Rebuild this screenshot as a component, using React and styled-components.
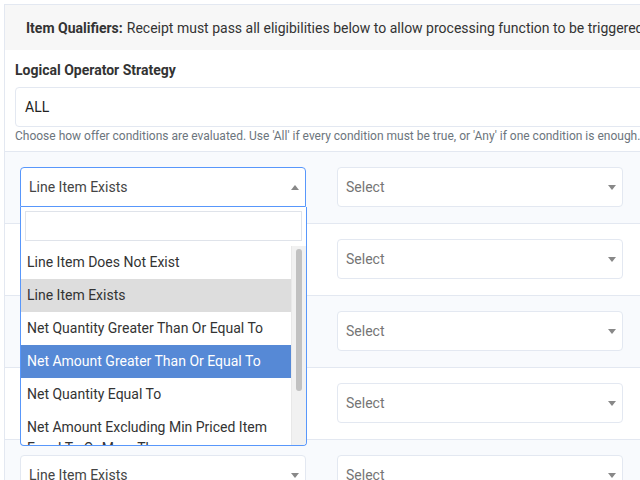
import React from "react";
import styled, { createGlobalStyle } from "styled-components";

const GlobalStyle = createGlobalStyle`
  html, body {
    margin: 0;
    padding: 0;
    background: #fff;
    overflow: hidden;
  }
  body {
    font-family: Roboto, "Liberation Sans", Arial, sans-serif;
    color: #333;
  }
  * {
    box-sizing: border-box;
  }
`;

const conditionOptions = [
  "Line Item Does Not Exist",
  "Line Item Exists",
  "Net Quantity Greater Than Or Equal To",
  "Net Amount Greater Than Or Equal To",
  "Net Quantity Equal To",
  "Net Amount Excluding Min Priced Item Equal To Or More Than",
  "Net Quantity Less Than",
  "Net Amount Less Than",
];

const rows = [
  { condition: "Line Item Exists", open: true },
  { condition: "Line Item Exists" },
  { condition: "Line Item Exists" },
  { condition: "Line Item Exists" },
  { condition: "Line Item Exists" },
];

const Page = styled.div`
  padding: 4px 0 0 4px;
`;

const Card = styled.div`
  width: 960px;
  border: 1px solid #e3e8f1;
  background: #fff;
`;

const CardHeader = styled.div`
  height: 45px;
  display: flex;
  align-items: center;
  padding: 0 21px;
  background: #f7f7f7;
  font-size: 14px;
  color: #333;
  white-space: nowrap;

  strong {
    font-weight: 700;
    margin-right: 4px;
  }
`;

const Section = styled.div`
  padding: 10px 10px 6px;
`;

const Label = styled.div`
  font-size: 14px;
  font-weight: 700;
  line-height: 20px;
  color: #333;
  margin-bottom: 7px;
`;

const TextInput = styled.div`
  height: 40px;
  display: flex;
  align-items: center;
  padding: 0 9px;
  border: 1px solid #e3e8f1;
  border-radius: 4px;
  font-size: 14px;
  color: #222;
`;

const HelpText = styled.div`
  font-size: 12px;
  line-height: 18px;
  color: #6c757d;
  white-space: nowrap;
`;

const ConditionRow = styled.div`
  display: grid;
  grid-template-columns: repeat(3, 286px);
  align-items: start;
  column-gap: 31px;
  height: 72px;
  padding: 15px 15px 0;
  border-top: 1px solid #e3e8f1;
  background: ${(props) => (props.shaded ? "#f8fafd" : "#fff")};
`;

const SelectWrap = styled.div`
  position: relative;
`;

const SelectBox = styled.div`
  position: relative;
  height: 40px;
  display: flex;
  align-items: center;
  padding: 0 30px 0 8px;
  background: #fff;
  border: 1px solid ${(props) => (props.open ? "#5897fb" : "#e3e8f1")};
  border-radius: ${(props) => (props.open ? "4px 4px 0 0" : "4px")};
  font-size: 14px;
  color: ${(props) => (props.placeholder ? "#757575" : "#444")};
  white-space: nowrap;
`;

const Arrow = styled.span`
  position: absolute;
  right: 6px;
  top: 50%;
  margin-top: -2px;
  width: 0;
  height: 0;
  border-style: solid;
  border-color: ${(props) =>
    props.up ? "transparent transparent #888 transparent" : "#888 transparent transparent transparent"};
  border-width: ${(props) => (props.up ? "0 4px 5px 4px" : "5px 4px 0 4px")};
`;

const Dropdown = styled.div`
  position: absolute;
  top: 100%;
  left: 0;
  width: 287px;
  z-index: 10;
  background: #fff;
  border: 1px solid #5897fb;
  border-top: none;
  border-radius: 0 0 4px 4px;
  overflow: hidden;
`;

const SearchField = styled.div`
  padding: 4px 4px 5px;
`;

const SearchInput = styled.input`
  display: block;
  width: 100%;
  height: 30px;
  border: 1px solid #dfe3ea;
  outline: none;
  font-size: 14px;
  font-family: inherit;
`;

const Results = styled.div`
  display: flex;
  height: 199px;
`;

const OptionList = styled.ul`
  flex: 1;
  list-style: none;
  margin: 0;
  padding: 0;
  overflow: hidden;
`;

const ScrollTrack = styled.div`
  width: 15px;
  flex-shrink: 0;
  padding: 3px 4px 0;
  background: #f1f1f1;
  border-left: 1px solid #e8e8e8;
`;

const ScrollThumb = styled.div`
  height: 142px;
  border-radius: 4px;
  background: #c1c1c1;
`;

const Option = styled.li`
  padding: 6px;
  font-size: 14px;
  line-height: 21px;
  color: ${(props) => (props.highlighted ? "#fff" : "#333")};
  background: ${(props) =>
    props.highlighted ? "#5689d6" : props.selected ? "#ddd" : "transparent"};
`;

const ConditionSelect = ({ value, open }) => (
  <SelectWrap>
    <SelectBox open={open}>
      {value}
      <Arrow up={open} />
    </SelectBox>
    {open && (
      <Dropdown>
        <SearchField>
          <SearchInput type="search" />
        </SearchField>
        <Results>
          <OptionList>
            {conditionOptions.map((opt, i) => (
              <Option
                key={opt}
                selected={opt === value}
                highlighted={i === 3}
              >
                {opt}
              </Option>
            ))}
          </OptionList>
          <ScrollTrack>
            <ScrollThumb />
          </ScrollTrack>
        </Results>
      </Dropdown>
    )}
  </SelectWrap>
);

const ValueSelect = () => (
  <SelectWrap>
    <SelectBox placeholder>
      Select
      <Arrow />
    </SelectBox>
  </SelectWrap>
);

const App = () => {
  return (
    <Page>
      <GlobalStyle />
      <Card>
        <CardHeader>
          <strong>Item Qualifiers:</strong> Receipt must pass all eligibilities
          below to allow processing function to be triggered.
        </CardHeader>
        <Section>
          <Label>Logical Operator Strategy</Label>
          <TextInput>ALL</TextInput>
          <HelpText>
            Choose how offer conditions are evaluated. Use 'All' if every
            condition must be true, or 'Any' if one condition is enough.
          </HelpText>
        </Section>
        {rows.map((row, index) => (
          <ConditionRow key={index} shaded={index % 2 === 0}>
            <ConditionSelect value={row.condition} open={row.open} />
            <ValueSelect />
            <ValueSelect />
          </ConditionRow>
        ))}
      </Card>
    </Page>
  );
};

export default App;
